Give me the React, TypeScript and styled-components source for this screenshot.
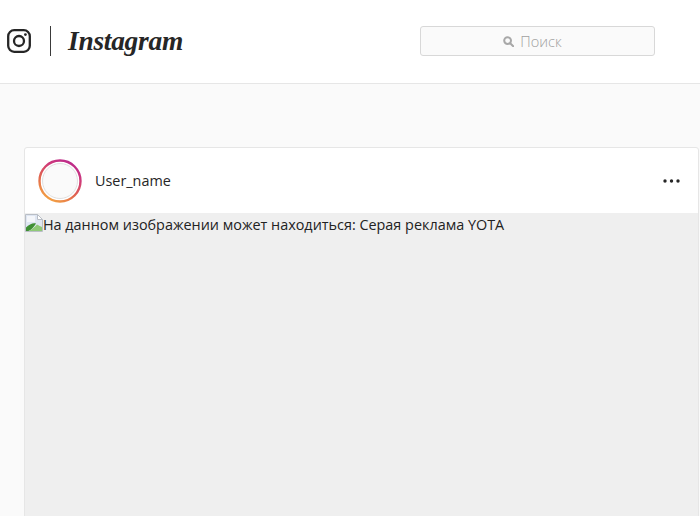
import React from "react";
import styled, { createGlobalStyle } from "styled-components";

const Global = createGlobalStyle`
  html, body { margin: 0; padding: 0; height: 516px; overflow: hidden; background: #fafafa; }
  body { font-family: "Open Sans", "Noto Sans", "Liberation Sans", sans-serif; color: #262626; }
`;
const Page = styled.div`display: flex; flex-direction: column; height: 516px; overflow: hidden;`;
const Header = styled.header`
  display: flex; align-items: center; flex: none; background: #fff;
  border-bottom: 1px solid #e6e6e6; padding: 0 0 1px 7px; box-sizing: border-box; height: 84px;
`;
const LogoGroup = styled.div`display: flex; align-items: center; width: 413px; flex: none;`;
const Divider = styled.div`width: 1px; height: 30px; background: #3a3a3a; margin: 0 17px 0 19px;`;
const Wordmark = styled.span`
  font-family: "Liberation Serif", serif; font-style: italic; font-weight: 700; font-size: 27.4px;
  line-height: 36px; color: #262626; letter-spacing: -0.25px; display: block;
`;
const Search = styled.div`
  width: 235px; height: 30px; box-sizing: border-box; display: flex; align-items: center; justify-content: center;
  gap: 6px; background: #fafafa; border: 1px solid #d8d8d8; border-radius: 3px; padding-right: 10px;
  color: #a0a0a0; font-size: 14.6px; font-weight: 300;
`;
const Main = styled.main`flex: 1; padding: 63px 1px 0 24px; min-height: 0;`;
const Card = styled.article`
  background: #fff; border: 1px solid #e6e6e6; border-radius: 3px; height: 420px; overflow: hidden;
`;
const CardHead = styled.div`display: flex; align-items: center; height: 65px; padding: 0 18px 0 13px;`;
const Username = styled.span`font-size: 14.4px; font-weight: 500; margin-left: 13px; flex: 1; color: #262626;`;
const Photo = styled.div`
  background: #efefef; height: 356px; display: flex; align-items: flex-start; padding-top: 1px;
  font-size: 14.4px; color: #222;
`;
const Broken = styled.svg`flex: none; width: 18px; height: 18px;`;
const Alt = styled.span`white-space: nowrap; line-height: 22px;`;

const InstaIcon = () => (
  <svg width="24" height="24" viewBox="0 0 24 24" fill="none" stroke="#262626">
    <rect x="1.2" y="1.2" width="21.6" height="21.6" rx="6" strokeWidth="2.3" />
    <circle cx="12" cy="12" r="5" strokeWidth="2.3" />
    <circle cx="18.4" cy="5.6" r="1.4" fill="#262626" stroke="none" />
  </svg>
);
const SearchIcon = () => (
  <svg width="11" height="11" viewBox="0 0 11 11" fill="none" stroke="#a8a8a8" strokeWidth="2">
    <circle cx="4.6" cy="4.6" r="3.4" />
    <path d="M7.2 7.2L10.2 10.2" strokeLinecap="round" />
  </svg>
);
const Avatar = () => (
  <svg width="44" height="44" viewBox="0 0 44 44" fill="none">
    <defs>
      <linearGradient id="ring" x1="0.2" y1="1" x2="0.75" y2="0">
        <stop offset="0" stopColor="#f5a742" />
        <stop offset="0.4" stopColor="#e0634f" />
        <stop offset="0.72" stopColor="#cf3a7a" />
        <stop offset="1" stopColor="#bb2a8c" />
      </linearGradient>
    </defs>
    <circle cx="22" cy="22" r="20.5" stroke="url(#ring)" strokeWidth="2.4" />
    <circle cx="22" cy="22" r="17.5" fill="#fafafa" stroke="#e0e0e0" />
  </svg>
);
const More = () => (
  <svg width="17" height="4" viewBox="0 0 17 4" fill="#262626">
    <circle cx="2" cy="2" r="1.7" /><circle cx="8.5" cy="2" r="1.7" /><circle cx="15" cy="2" r="1.7" />
  </svg>
);
const BrokenIcon = () => (
  <Broken viewBox="0 0 18 18">
    <path d="M.5.5H12.5L17.5 5.5V17.5H.5Z" fill="#dfe6f2" stroke="#b9bec6" />
    <path d="M12.5 .5V5.5H17.5Z" fill="#fff" stroke="#b9bec6" />
    <path d="M2 2h8v6H2z" fill="#f4f6fa" />
    <path d="M1 17V13.5C4 10.5 8 8.5 11 9.5C9 13 6 16 3.5 17Z" fill="#3f8f33" />
    <path d="M3.5 17C7 15.5 10 12.5 12 10.5C14 11.5 15.5 12.5 17 13V17Z" fill="#8fc977" />
  </Broken>
);

export default function App() {
  return (
    <Page>
      <Global />
      <Header>
        <LogoGroup>
          <InstaIcon />
          <Divider />
          <Wordmark>Instagram</Wordmark>
        </LogoGroup>
        <Search><SearchIcon />Поиск</Search>
      </Header>
      <Main>
        <Card>
          <CardHead>
            <Avatar />
            <Username>User_name</Username>
            <More />
          </CardHead>
          <Photo>
            <BrokenIcon />
            <Alt>На данном изображении может находиться: Серая реклама YOTA</Alt>
          </Photo>
        </Card>
      </Main>
    </Page>
  );
}
